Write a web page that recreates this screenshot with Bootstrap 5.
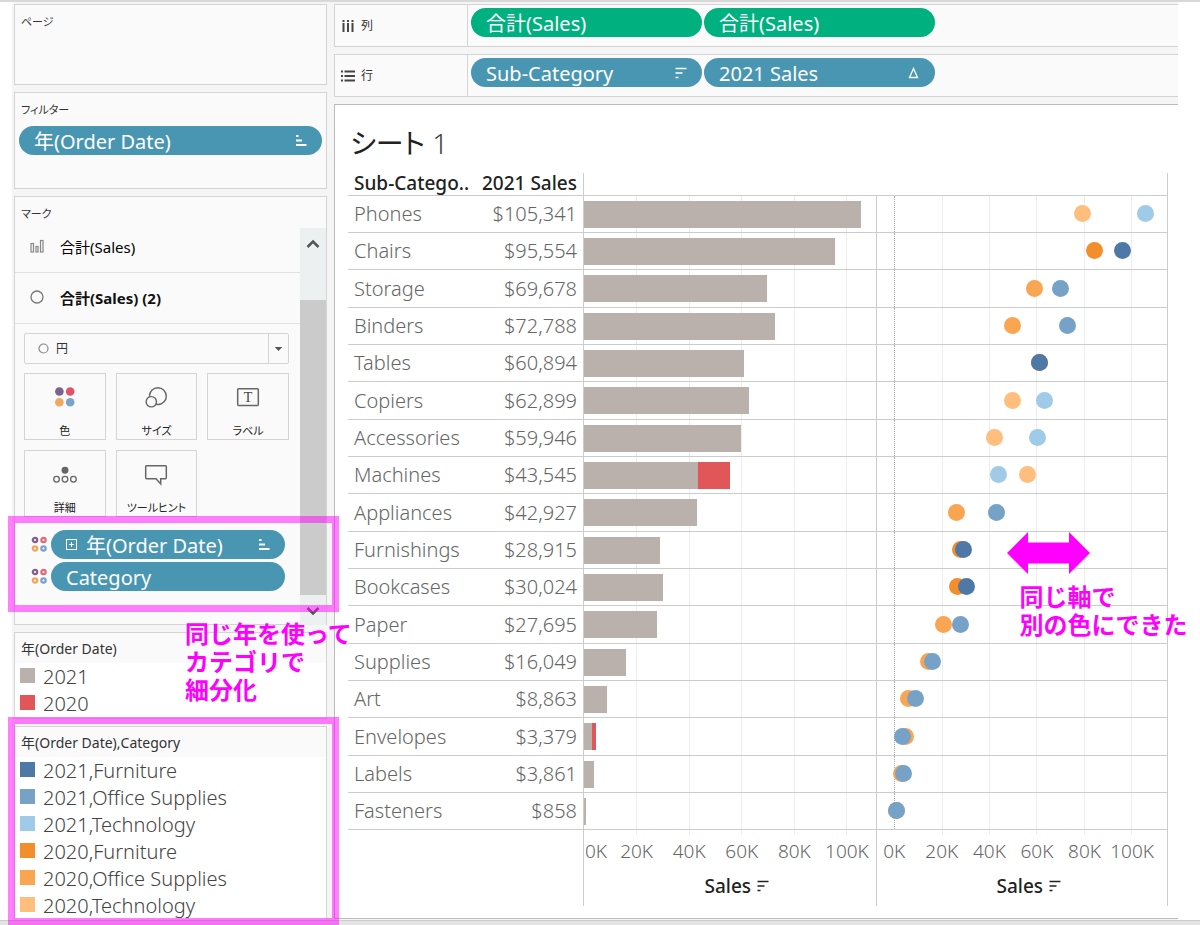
<!DOCTYPE html>
<html lang="ja">
<head>
<meta charset="utf-8">
<meta name="viewport" content="width=device-width, initial-scale=1">
<title>シート 1</title>
<link href="https://cdn.jsdelivr.net/npm/bootstrap@5.3.0/dist/css/bootstrap.min.css" rel="stylesheet">
<style>
  :root {
    --line: #d4d4d4;
    --dim: #4996b2;
    --measure: #00b180;
    --ui: "Noto Sans", "Noto Sans CJK JP", sans-serif;
  }
  body { font-family: var(--ui); font-size: 14px; line-height: 20px; color: #333; background: #fff; font-feature-settings: "palt"; }
  button, select { font-family: inherit; font-feature-settings: inherit; }
  .workspace { border-top: 2px solid #d8d8d8; min-height: 100vh; padding-left: 12px; padding-right: 22px; }
  .workspace::after { content: ""; position: absolute; left: 0; right: 0; bottom: 0; height: 5px; background: #e4e4e4; border-top: 1px solid #ccc; }
  .side { width: 322px; background: #f5f5f5; padding: 2px 7px 0 2px; gap: 7px; }
  .board { background: #f5f5f5; padding-top: 2px; gap: 7px; min-width: 0; }
  .pane { background: #fafafa; border: 1px solid var(--line); }
  .pane-title { font-size: 11px; font-weight: 400; line-height: 20px; margin: 0; padding: 7px 6px 0; }
  .legend-title { font-size: 14px; padding: 6px 6px 4px; }
  .pages { height: 81px; }
  .filters { height: 97px; }
  .filter-pills { padding: 6px 4px 0; }
  .pill { display: flex; align-items: center; height: 29px; border: 0; border-radius: 15px; color: #fff; font-size: 20px; line-height: 29px; padding: 1px 15px 0; background: var(--dim); text-align: left; white-space: nowrap; }
  .pill svg { flex: none; }
  .pill .end { margin-left: auto; }
  .pill-m { background: var(--measure); }
  .shelf { height: 43px; border-right: 0; }
  .shelf-name { width: 133px; border-right: 1px solid var(--line); padding-left: 6px; gap: 6px; font-size: 12px; }
  .shelf-pills { padding: 3px 3px; gap: 2px; }
  .shelf-pills .pill { width: 231px; }

  .marks { height: 429px; }
  .mark-row { height: 51px; border: 0; border-bottom: 1px solid #e2e2e2; background: none; padding: 0 0 0 14px; gap: 14px; font-size: 15px; text-align: left; }
  .mark-row-first { height: 45px; padding-bottom: 6px; }
  .mark-row b { color: #111; }
  .mark-body { padding: 9px 11px 0 9px; }
  .mark-select { height: 31px; border: 1px solid var(--line); background: #fafafa; border-radius: 2px; }
  .mark-select select { appearance: none; border: 0; background: transparent; width: 100%; height: 29px; padding: 0 0 0 31px; font-size: 12px; color: #333; }
  .mark-select .ring { position: absolute; left: 13px; top: 9px; }
  .mark-select .drop { position: absolute; right: 0; top: 0; width: 20px; height: 29px; border-left: 1px solid var(--line); }
  .mark-grid { display: grid; grid-template-columns: repeat(3, 1fr); gap: 10px; margin-top: 9px; }
  .mark-btn { height: 67px; border: 1px solid var(--line); background: #fafafa; padding: 9px 0 0; font-size: 11px; line-height: 16px; color: #222; display: flex; flex-direction: column; align-items: center; }
  .mark-btn svg { margin-bottom: 10px; }
  .encodings { margin-top: 13px; gap: 3px; padding-right: 4px; }
  .enc { gap: 3px; padding-left: 7px; }
  .rail { width: 26px; background: #edf0f0; }
  .rail button { border: 0; background: none; padding: 0; height: 30px; }
  .thumb { height: 295px; margin-top: 42px; background: #cbcbcb; }

  .legend-a { height: 87px; }
  .legend-b { height: 193px; }
  .legend-list { background: #fff; margin: 0; padding: 0 5px; list-style: none; }
  .legend-list li { display: flex; align-items: center; gap: 8px; height: 27px; font-size: 20px; font-weight: 300; color: #444; white-space: nowrap; }
  .swatch { width: 15px; height: 15px; flex: none; background: var(--c); margin-bottom: 3px; }

  .sheet { background: #fff; border: 1px solid #bbb; border-right: 0; padding: 18px 10px 12px 13px; }
  .sheet h1 { font-size: 28px; line-height: 40px; font-weight: 400; margin: 0; padding-left: 2px; height: 50px; color: #222; }
  .sheet h1 span { font-weight: 300; color: #444; }
  .viz { width: 100%; table-layout: fixed; border-collapse: separate; border-spacing: 0; font-size: 20px; line-height: 24px; font-weight: 300; color: #666; }
  .viz th, .viz td { padding: 0; border: 0 solid #ccc; }
  .viz .c-name { width: 125px; }
  .viz .c-sum { width: 110px; }
  .viz thead th { height: 23px; border-bottom-width: 1px; font-size: 19px; line-height: 20px; font-weight: 500; color: #222; white-space: nowrap; vertical-align: top; }
  .viz thead th:last-child { border-left-width: 1px; border-right-width: 1px; }
  .viz tbody tr { height: 37px; }
  .viz tbody tr:nth-child(3n) { height: 38px; }
  .viz tbody th, .viz tbody td { border-bottom-width: 1px; font-weight: 300; }
  .viz tbody th, .viz thead th:first-child { padding-left: 6px; }
  .viz .sum { text-align: right; padding-right: 6px; }
  .viz .bars, .viz .dots { position: relative; border-left-width: 1px; }
  .viz .dots { border-right-width: 1px; }
  .bars { --zero: 0%; --unit: .902%; }
  .dots { --zero: 6.1%; --unit: .819%; }
  .bars, .dots {
    background-repeat: no-repeat; background-size: 1px 100%;
    background-image: linear-gradient(#ededed, #ededed), linear-gradient(#ededed, #ededed), linear-gradient(#ededed, #ededed), linear-gradient(#ededed, #ededed), linear-gradient(#ededed, #ededed);
    background-position: calc(var(--zero) + var(--unit) * 20) 0, calc(var(--zero) + var(--unit) * 40) 0, calc(var(--zero) + var(--unit) * 60) 0, calc(var(--zero) + var(--unit) * 80) 0, calc(var(--zero) + var(--unit) * 100) 0;
  }
  .viz tfoot .bars, .viz tfoot .dots { background-size: 1px 5px; }
  .viz tbody .dots::before { content: ""; position: absolute; left: var(--zero); top: 0; bottom: 0; border-left: 1px dotted #aaa; }
  .stack { display: flex; height: 27px; }
  .stack i { width: calc(var(--v) * var(--unit)); background: #bab0ac; }
  .stack i.prev { background: #e15759; }
  .pt { position: absolute; left: calc(var(--zero) + var(--v) * var(--unit)); top: 50%; width: 17px; height: 17px; margin: -9px 0 0 -8px; border-radius: 50%; background: var(--c); }
  .f21 { --c: #4e79a7; } .o21 { --c: #76a2c8; } .t21 { --c: #a0cbe8; }
  .f20 { --c: #f28e2b; } .o20 { --c: #faa552; } .t20 { --c: #ffbe7d; }
  .y21 { --c: #bab0ac; } .y20 { --c: #e15759; }
  .viz tfoot td { height: 76px; vertical-align: top; font-size: 19px; }
  .ticks { position: relative; height: 44px; }
  .ticks span { position: absolute; top: 9px; left: calc(var(--zero) + var(--v) * var(--unit)); transform: translateX(-50%); }
  .ticks .edge { transform: none; left: 1px; }
  .axis-name { font-weight: 500; color: #222; gap: 6px; line-height: 24px; padding-left: 14px; }

  .note { position: absolute; color: #f0f; font-size: 24px; line-height: 28px; font-weight: 700; margin: 0; white-space: nowrap; font-feature-settings: normal; z-index: 3; }
  .frame { position: absolute; border: 7px solid rgba(255, 0, 255, .5); pointer-events: none; left: -7px; right: -13px; z-index: 2; }
  .frame-enc { top: 319px; height: 96px; }
  .frame-legend { top: -10px; height: 208px; }
  .note-left { left: 170px; top: -13px; }
  .note-right { left: 143px; top: 14px; }
  .arrow { position: absolute; left: 130px; top: 0; z-index: 3; }
</style>
</head>
<body>
<svg width="0" height="0" class="position-absolute" aria-hidden="true">
  <defs>
    <symbol id="sort-asc" viewBox="0 0 12 12"><path d="M1 1h2.500M1 5.500h6M1 10h10.500" stroke="currentColor" stroke-width="2" fill="none"/></symbol>
    <symbol id="sort-desc" viewBox="0 0 12 12"><path d="M.5 1.500H11.500M.5 6H7.500M.5 10.500H3.500" stroke="currentColor" stroke-width="1.700" fill="none"/></symbol>
    <symbol id="palette" viewBox="0 0 22 22"><circle cx="5" cy="5" r="4.600" fill="#7b6291"/><circle cx="16.500" cy="5" r="4.600" fill="#df5566"/><circle cx="5" cy="16.500" r="4.600" fill="#f4a560"/><circle cx="16.500" cy="16.500" r="4.600" fill="#7ba2cb"/></symbol>
    <symbol id="palette-ring" viewBox="0 0 17 17"><g fill="none" stroke-width="2.200"><circle cx="4" cy="4" r="2.200" stroke="#7b6291"/><circle cx="12.500" cy="4" r="2.200" stroke="#df6b78"/><circle cx="4" cy="12.500" r="2.200" stroke="#f4a560"/><circle cx="12.500" cy="12.500" r="2.200" stroke="#7ba2cb"/></g></symbol>
  </defs>
</svg>

<div class="workspace position-relative d-flex">
  <aside class="side d-flex flex-column flex-shrink-0">
    <section class="pane pages"><h2 class="pane-title">ページ</h2></section>

    <section class="pane filters">
      <h2 class="pane-title">フィルター</h2>
      <div class="filter-pills"><button type="button" class="pill w-100">年(Order Date)<svg class="end" width="12" height="12"><use href="#sort-asc"/></svg></button></div>
    </section>

    <section class="pane marks position-relative d-flex flex-column">
      <h2 class="pane-title pb-1">マーク</h2>
      <div class="d-flex flex-grow-1">
        <div class="flex-grow-1 d-flex flex-column">
          <button type="button" class="mark-row mark-row-first d-flex align-items-center">
            <svg width="17" height="16" fill="none" stroke="#888" stroke-width="1.200"><rect x="2" y="4.500" width="2.500" height="8.500"/><rect x="7" y="7.500" width="2" height="5.500"/><rect x="11.500" y="1.500" width="2.500" height="11.500"/></svg>合計(Sales)
          </button>
          <button type="button" class="mark-row d-flex align-items-center">
            <svg width="17" height="16"><circle cx="8" cy="7" r="6" fill="none" stroke="#777" stroke-width="1.300"/></svg><b>合計(Sales) (2)</b>
          </button>
          <div class="mark-body">
            <div class="mark-select position-relative">
              <svg class="ring" width="11" height="11"><circle cx="5.500" cy="5.500" r="4.500" fill="none" stroke="#888" stroke-width="1.200"/></svg>
              <select aria-label="マークの種類"><option>円</option></select>
              <svg class="drop pe-none" viewBox="0 0 20 29"><path d="M6 13h8l-4 4z" fill="#555"/></svg>
            </div>
            <div class="mark-grid">
              <button type="button" class="mark-btn"><svg width="32" height="32" viewBox="0 0 32 32"><use href="#palette" x="5" y="4" width="22" height="22"/></svg>色</button>
              <button type="button" class="mark-btn"><svg width="32" height="32" viewBox="0 0 32 32" fill="#fafafa" stroke="#666" stroke-width="1.500"><circle cx="18" cy="14" r="9"/><circle cx="11" cy="20" r="5.500"/></svg>サイズ</button>
              <button type="button" class="mark-btn"><svg width="32" height="32" viewBox="0 0 32 32"><rect x="5" y="6" width="22" height="18" rx="1" fill="none" stroke="#666" stroke-width="1.600"/><text x="16" y="20" text-anchor="middle" font-family="Liberation Serif, serif" font-size="15" fill="#444">T</text></svg>ラベル</button>
              <button type="button" class="mark-btn"><svg width="32" height="32" viewBox="0 0 32 32" fill="none" stroke="#666" stroke-width="1.400"><circle cx="16" cy="11" r="3" fill="#666"/><circle cx="7" cy="20.500" r="3"/><circle cx="16" cy="20.500" r="3"/><circle cx="25" cy="20.500" r="3"/></svg>詳細</button>
              <button type="button" class="mark-btn"><svg width="32" height="32" viewBox="0 0 32 32"><path d="M6 6h20q1 0 1 1v12q0 1-1 1h-5V25.500l-5-5.500H6q-1 0-1-1v-12q0-1 1-1z" fill="none" stroke="#666" stroke-width="1.600"/></svg>ツールヒント</button>
            </div>
            <div class="encodings d-flex flex-column">
              <div class="enc d-flex align-items-center"><svg width="17" height="17"><use href="#palette-ring"/></svg><button type="button" class="pill flex-grow-1"><svg width="12" height="12" fill="none" stroke="#fff" class="me-2"><rect x=".5" y=".5" width="10" height="10"/><path d="M3 5.500h5M5.500 3v5"/></svg>年(Order Date)<svg class="end" width="12" height="12"><use href="#sort-asc"/></svg></button></div>
              <div class="enc d-flex align-items-center"><svg width="17" height="17"><use href="#palette-ring"/></svg><button type="button" class="pill flex-grow-1">Category</button></div>
            </div>
          </div>
        </div>
        <div class="rail d-flex flex-column">
          <button type="button" aria-label="上へ"><svg width="14" height="10"><path d="M1.500 8l5.500-5.500 5.500 5.500" fill="none" stroke="#555" stroke-width="2.500"/></svg></button>
          <div class="thumb"></div>
          <button type="button" aria-label="下へ"><svg width="14" height="10"><path d="M1.500 2l5.500 5.500 5.500-5.500" fill="none" stroke="#555" stroke-width="2.500"/></svg></button>
        </div>
      </div>
      <div class="frame frame-enc"></div>
    </section>

    <section class="pane legend-a position-relative">
      <h2 class="pane-title legend-title">年(Order Date)</h2>
      <ul class="legend-list">
        <li><span class="swatch y21"></span>2021</li>
        <li><span class="swatch y20"></span>2020</li>
      </ul>
      <p class="note note-left">同じ年を使って<br>カテゴリで<br>細分化</p>
    </section>

    <section class="pane legend-b position-relative">
      <h2 class="pane-title legend-title">年(Order Date),Category</h2>
      <ul class="legend-list">
        <li><span class="swatch f21"></span>2021,Furniture</li>
        <li><span class="swatch o21"></span>2021,Office Supplies</li>
        <li><span class="swatch t21"></span>2021,Technology</li>
        <li><span class="swatch f20"></span>2020,Furniture</li>
        <li><span class="swatch o20"></span>2020,Office Supplies</li>
        <li><span class="swatch t20"></span>2020,Technology</li>
      </ul>
      <div class="frame frame-legend"></div>
    </section>
  </aside>

  <main class="board d-flex flex-column flex-grow-1">
    <div class="pane shelf d-flex">
      <div class="shelf-name d-flex align-items-center"><svg width="14" height="14" stroke="#444" stroke-width="2"><path d="M2.500 1v2M7 1v2M11.500 1v2M2.500 4v9M7 4v9M11.500 4v9"/></svg>列</div>
      <div class="shelf-pills d-flex"><button type="button" class="pill pill-m">合計(Sales)</button><button type="button" class="pill pill-m">合計(Sales)</button></div>
    </div>
    <div class="pane shelf d-flex">
      <div class="shelf-name d-flex align-items-center"><svg width="14" height="14" stroke="#444" stroke-width="2"><path d="M0 2.500h2M0 7h2M0 11.500h2M3.500 2.500h10.500M3.500 7h10.500M3.500 11.500h10.500"/></svg>行</div>
      <div class="shelf-pills d-flex"><button type="button" class="pill">Sub-Category<svg class="end" width="12" height="12"><use href="#sort-desc"/></svg></button><button type="button" class="pill">2021 Sales<svg class="end" width="12" height="12"><path d="M5.500 1.500L9.500 10.500H1.500z" fill="none" stroke="#fff" stroke-width="1.300"/></svg></button></div>
    </div>

    <section class="sheet">
      <h1>シート <span>1</span></h1>
      <table class="viz">
        <colgroup><col class="c-name"><col class="c-sum"><col><col></colgroup>
        <thead><tr><th scope="col">Sub-Catego..</th><th scope="col" class="sum">2021 Sales</th><th colspan="2"></th></tr></thead>
        <tbody>
          <tr><th scope="row">Phones</th><td class="sum">$105,341</td><td class="bars"><div class="stack"><i style="--v:105.3"></i></div></td><td class="dots"><i class="pt t20" style="--v:78.9"></i><i class="pt t21" style="--v:105.3"></i></td></tr>
          <tr><th scope="row">Chairs</th><td class="sum">$95,554</td><td class="bars"><div class="stack"><i style="--v:95.6"></i></div></td><td class="dots"><i class="pt f20" style="--v:83.8"></i><i class="pt f21" style="--v:95.6"></i></td></tr>
          <tr><th scope="row">Storage</th><td class="sum">$69,678</td><td class="bars"><div class="stack"><i style="--v:69.7"></i></div></td><td class="dots"><i class="pt o20" style="--v:58.8"></i><i class="pt o21" style="--v:69.7"></i></td></tr>
          <tr><th scope="row">Binders</th><td class="sum">$72,788</td><td class="bars"><div class="stack"><i style="--v:72.8"></i></div></td><td class="dots"><i class="pt o20" style="--v:49.5"></i><i class="pt o21" style="--v:72.8"></i></td></tr>
          <tr><th scope="row">Tables</th><td class="sum">$60,894</td><td class="bars"><div class="stack"><i style="--v:60.9"></i></div></td><td class="dots"><i class="pt f20" style="--v:60.9"></i><i class="pt f21" style="--v:60.9"></i></td></tr>
          <tr><th scope="row">Copiers</th><td class="sum">$62,899</td><td class="bars"><div class="stack"><i style="--v:62.9"></i></div></td><td class="dots"><i class="pt t20" style="--v:49.5"></i><i class="pt t21" style="--v:62.9"></i></td></tr>
          <tr><th scope="row">Accessories</th><td class="sum">$59,946</td><td class="bars"><div class="stack"><i style="--v:59.9"></i></div></td><td class="dots"><i class="pt t20" style="--v:41.9"></i><i class="pt t21" style="--v:59.9"></i></td></tr>
          <tr><th scope="row">Machines</th><td class="sum">$43,545</td><td class="bars"><div class="stack"><i style="--v:43.5"></i><i class="prev" style="--v:12.1"></i></div></td><td class="dots"><i class="pt t20" style="--v:55.7"></i><i class="pt t21" style="--v:43.5"></i></td></tr>
          <tr><th scope="row">Appliances</th><td class="sum">$42,927</td><td class="bars"><div class="stack"><i style="--v:42.9"></i></div></td><td class="dots"><i class="pt o20" style="--v:26"></i><i class="pt o21" style="--v:42.9"></i></td></tr>
          <tr><th scope="row">Furnishings</th><td class="sum">$28,915</td><td class="bars"><div class="stack"><i style="--v:28.9"></i></div></td><td class="dots"><i class="pt f20" style="--v:27.5"></i><i class="pt f21" style="--v:28.9"></i></td></tr>
          <tr><th scope="row">Bookcases</th><td class="sum">$30,024</td><td class="bars"><div class="stack"><i style="--v:30"></i></div></td><td class="dots"><i class="pt f20" style="--v:26.2"></i><i class="pt f21" style="--v:30"></i></td></tr>
          <tr><th scope="row">Paper</th><td class="sum">$27,695</td><td class="bars"><div class="stack"><i style="--v:27.7"></i></div></td><td class="dots"><i class="pt o20" style="--v:20.4"></i><i class="pt o21" style="--v:27.7"></i></td></tr>
          <tr><th scope="row">Supplies</th><td class="sum">$16,049</td><td class="bars"><div class="stack"><i style="--v:16"></i></div></td><td class="dots"><i class="pt o20" style="--v:14.2"></i><i class="pt o21" style="--v:16"></i></td></tr>
          <tr><th scope="row">Art</th><td class="sum">$8,863</td><td class="bars"><div class="stack"><i style="--v:8.9"></i></div></td><td class="dots"><i class="pt o20" style="--v:5.6"></i><i class="pt o21" style="--v:8.9"></i></td></tr>
          <tr><th scope="row">Envelopes</th><td class="sum">$3,379</td><td class="bars"><div class="stack"><i style="--v:3.1"></i><i class="prev" style="--v:1.5"></i></div></td><td class="dots"><i class="pt o20" style="--v:4.5"></i><i class="pt o21" style="--v:3.1"></i></td></tr>
          <tr><th scope="row">Labels</th><td class="sum">$3,861</td><td class="bars"><div class="stack"><i style="--v:3.9"></i></div></td><td class="dots"><i class="pt o20" style="--v:2.8"></i><i class="pt o21" style="--v:3.9"></i></td></tr>
          <tr><th scope="row">Fasteners</th><td class="sum">$858</td><td class="bars"><div class="stack"><i style="--v:.9"></i></div></td><td class="dots"><i class="pt o20" style="--v:.9"></i><i class="pt o21" style="--v:.9"></i></td></tr>
        </tbody>
        <tfoot><tr>
          <td colspan="2"></td>
          <td class="bars">
            <div class="ticks"><span class="edge">0K</span><span style="--v:20">20K</span><span style="--v:40">40K</span><span style="--v:60">60K</span><span style="--v:80">80K</span><span style="--v:100">100K</span></div>
            <div class="axis-name d-flex justify-content-center align-items-center">Sales<svg width="12" height="12"><use href="#sort-desc"/></svg></div>
          </td>
          <td class="dots">
            <div class="ticks"><span style="--v:0">0K</span><span style="--v:20">20K</span><span style="--v:40">40K</span><span style="--v:60">60K</span><span style="--v:80">80K</span><span style="--v:100">100K</span></div>
            <div class="axis-name d-flex justify-content-center align-items-center">Sales<svg width="12" height="12"><use href="#sort-desc"/></svg></div>
          </td>
        </tr></tfoot>
      </table>
    </section>
  </main>
</div>
<script src="https://cdn.jsdelivr.net/npm/bootstrap@5.3.0/dist/js/bootstrap.bundle.min.js"></script>
<script>
  // Pin the comment about the shared axis to the Furnishings and Bookcases rows.
  const cells = document.querySelectorAll('tbody .dots');
  cells[9].insertAdjacentHTML('beforeend', '<svg class="arrow" width="83" height="42"><path d="M0 21L21 0v10.500h41V0l21 21-21 21V31.500H21V42z" fill="#f0f"/></svg>');
  cells[10].insertAdjacentHTML('beforeend', '<p class="note note-right">同じ軸で<br>別の色にできた</p>');
</script>
</body>
</html>
